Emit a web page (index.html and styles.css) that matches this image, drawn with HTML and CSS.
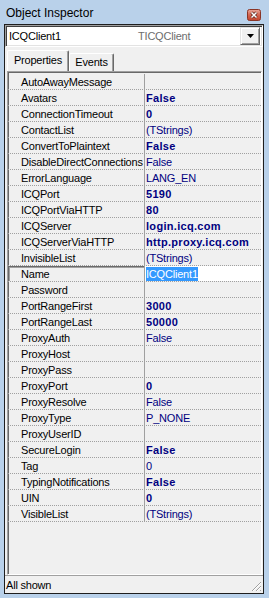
FILE: index.html
```html
<!DOCTYPE html>
<html>
<head>
    <title>Object Inspector</title>
    <link rel="stylesheet" href="styles.css">
</head>
<body>

    <div class="window">
        <div class="titlebar">
            <span class="title">Object Inspector</span>
            <span class="close-btn">
                <svg width="14" height="12" viewBox="0 0 14 12">
                    <defs>
                        <linearGradient id="closeGrad" x1="0" y1="0" x2="0" y2="1">
                            <stop offset="0" stop-color="#e9a89b"/>
                            <stop offset="0.5" stop-color="#d4644f"/>
                            <stop offset="1" stop-color="#c2432c"/>
                        </linearGradient>
                    </defs>
                    <rect x="0.5" y="0.5" width="13" height="11" rx="2" fill="url(#closeGrad)" stroke="#8a3526"/>
                    <path d="M4.5 3.5 L9.5 8.5 M9.5 3.5 L4.5 8.5" stroke="#5a2018" stroke-width="3"/>
                    <path d="M4.5 3.5 L9.5 8.5 M9.5 3.5 L4.5 8.5" stroke="#ffffff" stroke-width="1.5"/>
                </svg>
            </span>
        </div>

        <div class="client">
            <div class="combo">
                <span class="combo-name">ICQClient1</span>
                <span class="combo-type">TICQClient</span>
                <span class="combo-btn">
                    <svg width="7" height="4" viewBox="0 0 7 4"><path d="M0 0 H7 L3.5 4 Z" fill="#000"/></svg>
                </span>
            </div>

            <div class="tabs">
                <div class="tab active">Properties</div>
                <div class="tab">Events</div>
            </div>

            <div class="grid">
                <div class="row"><div class="prop">AutoAwayMessage</div><div class="val"></div></div>
                <div class="row"><div class="prop">Avatars</div><div class="val bold">False</div></div>
                <div class="row"><div class="prop">ConnectionTimeout</div><div class="val bold">0</div></div>
                <div class="row"><div class="prop">ContactList</div><div class="val">(TStrings)</div></div>
                <div class="row"><div class="prop">ConvertToPlaintext</div><div class="val bold">False</div></div>
                <div class="row"><div class="prop">DisableDirectConnections</div><div class="val">False</div></div>
                <div class="row"><div class="prop">ErrorLanguage</div><div class="val">LANG_EN</div></div>
                <div class="row"><div class="prop">ICQPort</div><div class="val bold">5190</div></div>
                <div class="row"><div class="prop">ICQPortViaHTTP</div><div class="val bold">80</div></div>
                <div class="row"><div class="prop">ICQServer</div><div class="val bold">login.icq.com</div></div>
                <div class="row"><div class="prop">ICQServerViaHTTP</div><div class="val bold">http.proxy.icq.com</div></div>
                <div class="row"><div class="prop">InvisibleList</div><div class="val">(TStrings)</div></div>
                <div class="row selected"><div class="prop">Name</div><div class="val"><span class="edit-sel">ICQClient1</span></div></div>
                <div class="row"><div class="prop">Password</div><div class="val"></div></div>
                <div class="row"><div class="prop">PortRangeFirst</div><div class="val bold">3000</div></div>
                <div class="row"><div class="prop">PortRangeLast</div><div class="val bold">50000</div></div>
                <div class="row"><div class="prop">ProxyAuth</div><div class="val">False</div></div>
                <div class="row"><div class="prop">ProxyHost</div><div class="val"></div></div>
                <div class="row"><div class="prop">ProxyPass</div><div class="val"></div></div>
                <div class="row"><div class="prop">ProxyPort</div><div class="val bold">0</div></div>
                <div class="row"><div class="prop">ProxyResolve</div><div class="val">False</div></div>
                <div class="row"><div class="prop">ProxyType</div><div class="val">P_NONE</div></div>
                <div class="row"><div class="prop">ProxyUserID</div><div class="val"></div></div>
                <div class="row"><div class="prop">SecureLogin</div><div class="val bold">False</div></div>
                <div class="row"><div class="prop">Tag</div><div class="val">0</div></div>
                <div class="row"><div class="prop">TypingNotifications</div><div class="val bold">False</div></div>
                <div class="row"><div class="prop">UIN</div><div class="val bold">0</div></div>
                <div class="row"><div class="prop">VisibleList</div><div class="val">(TStrings)</div></div>
            </div>

            <div class="status">
                <span>All shown</span>
                <svg class="grip" width="12" height="12" viewBox="0 0 12 12">
                    <path d="M11 2 L2 11 M11 6 L6 11 M11 10 L10 11" stroke="#a0a0a0" stroke-width="1"/>
                    <path d="M11 3 L3 11 M11 7 L7 11" stroke="#ffffff" stroke-width="1"/>
                </svg>
            </div>
        </div>
    </div>

</body>
</html>
```

FILE: styles.css
```css
body {
    margin: 0;
    font-family: "Liberation Sans", Arial, sans-serif;
    font-size: 11px;
    letter-spacing: -0.2px;
    color: #000;
}

.window {
    width: 269px;
    height: 598px;
    box-sizing: border-box;
    padding: 0 5px 4px 4px;
    background: #b9d1ea;
    display: flex;
    flex-direction: column;
}

.titlebar {
    height: 24px;
    box-sizing: border-box;
    padding: 3px 3px 0 2px;
    display: flex;
    justify-content: space-between;
}

.title {
    font-size: 12px;
    line-height: 21px;
    letter-spacing: 0;
}

.close-btn {
    margin-top: 6px;
    width: 14px;
    height: 12px;
}

.close-btn svg {
    display: block;
}

.client {
    flex: 1;
    border: 1px solid #1e1e1e;
    background: #f0f0f0;
    display: flex;
    flex-direction: column;
}

/* component selector */
.combo {
    height: 22px;
    box-sizing: border-box;
    background: white;
    border-top: 1px solid #a0a0a0;
    border-left: 1px solid #a0a0a0;
    border-right: 1px solid #ffffff;
    border-bottom: 1px solid #ffffff;
    box-shadow: inset 1px 1px 0 #404040, inset -1px -1px 0 #e3e3e3;
    display: flex;
    align-items: center;
    padding: 1px 2px 1px 2px;
}

.combo-name {
    width: 129px;
    padding-left: 1px;
}

.combo-type {
    flex: 1;
    color: #6d6d6d;
}

.combo-btn {
    width: 20px;
    height: 18px;
    box-sizing: border-box;
    background: #f0f0f0;
    border-top: 1px solid #e3e3e3;
    border-left: 1px solid #e3e3e3;
    border-right: 1px solid #696969;
    border-bottom: 1px solid #696969;
    box-shadow: inset 1px 1px 0 #ffffff, inset -1px -1px 0 #a0a0a0;
    display: flex;
    justify-content: center;
    align-items: center;
}

.combo-btn svg {
    display: block;
}

/* tabs */
.tabs {
    height: 24px;
    box-sizing: border-box;
    padding-left: 2px;
    display: flex;
    align-items: flex-end;
}

.tab {
    box-sizing: border-box;
    height: 18px;
    width: 45px;
    text-align: center;
    line-height: 17px;
    border-top: 1px solid #ffffff;
    border-left: 1px solid #ffffff;
    border-right: 1px solid #696969;
    box-shadow: inset -1px 0 0 #a0a0a0;
    border-radius: 2px 2px 0 0;
}

.tab.active {
    height: 21px;
    width: 62px;
    line-height: 18px;
}

/* property grid */
.grid {
    height: 504px;
    box-sizing: border-box;
    margin: 0 1px 0 2px;
    padding-top: 2px;
    border-top: 1px solid #a0a0a0;
    border-left: 1px solid #a0a0a0;
    border-right: 1px solid #ffffff;
    border-bottom: 1px solid #ffffff;
    box-shadow: inset 1px 1px 0 #696969;
    overflow: hidden;
}

.row {
    height: 16px;
    box-sizing: border-box;
    border-bottom: 1px dotted #a0a0a0;
    display: flex;
    overflow: hidden;
}

.prop {
    width: 137px;
    flex-shrink: 0;
    box-sizing: border-box;
    padding: 2px 0 0 13px;
    line-height: 13px;
    border-right: 1px solid #a0a0a0;
    white-space: nowrap;
    overflow: hidden;
}

.val {
    flex: 1;
    padding: 2px 0 0 1px;
    line-height: 13px;
    color: #000080;
    white-space: nowrap;
    overflow: hidden;
}

.val.bold {
    font-weight: bold;
    letter-spacing: 0.3px;
}

.row.selected .prop {
    box-shadow: inset 1px 1px 0 #696969, inset 2px 2px 0 #a0a0a0;
}

.row.selected .val {
    background: white;
    padding-top: 1px;
}

.edit-sel {
    display: inline-block;
    background: #3399ff;
    color: white;
    line-height: 13px;
    padding-top: 1px;
}

/* status bar */
.status {
    flex: 1;
    border-top: 1px solid #a0a0a0;
    padding-left: 1px;
    display: flex;
    justify-content: space-between;
    align-items: flex-end;
    line-height: 16px;
}

.grip {
    display: block;
    margin: 0 1px 1px 0;
}
```
